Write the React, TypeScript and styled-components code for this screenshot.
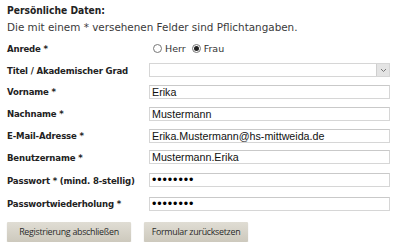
import { createGlobalStyle } from "styled-components";
import styled from "styled-components";

const GlobalStyle = createGlobalStyle`
  html, body {
    margin: 0;
    padding: 0;
    background: #fff;
  }
  body {
    font-family: "DejaVu Sans", Verdana, sans-serif;
    color: #333;
  }
`;

const Page = styled.div`
  padding: 4px 7px 0 7px;
  width: 390px;
  box-sizing: border-box;
`;

const Heading = styled.h2`
  margin: 0;
  font-family: "DejaVu Sans Condensed", "DejaVu Sans", sans-serif;
  font-size: 10.2px;
  font-weight: bold;
  color: #222;
  line-height: 13px;
`;

const Note = styled.p`
  margin: 4px 0 0 0;
  font-size: 10.4px;
  line-height: 13px;
  color: #3a3a3a;
  white-space: nowrap;
`;

const Form = styled.form`
  margin-top: 3.5px;
  display: flex;
  flex-direction: column;
`;

const Row = styled.div<{ $tall?: boolean }>`
  display: grid;
  grid-template-columns: 142px 241px;
  align-items: center;
  height: ${(p) => (p.$tall ? "23.5px" : "21.8px")};
`;

const Label = styled.label`
  font-family: "DejaVu Sans Condensed", "DejaVu Sans", sans-serif;
  font-size: 9.5px;
  font-weight: bold;
  color: #222;
  white-space: nowrap;
  letter-spacing: -0.15px;
`;

const Field = styled.input`
  box-sizing: border-box;
  height: 14px;
  width: 100%;
  margin: 0;
  padding: 0 2px;
  border: 1px solid #d6d6d6;
  border-top-color: #c9c9c9;
  background: #fff;
  font-family: "Liberation Sans", Arial, sans-serif;
  font-size: 10.7px;
  color: #111;
  outline: none;
  &[type="password"] {
    font-size: 12.5px;
    letter-spacing: 0.9px;
    color: #000;
  }
`;

const SelectBox = styled.div`
  box-sizing: border-box;
  height: 14px;
  width: 100%;
  border: 1px solid #d6d6d6;
  background: #fff;
  display: flex;
  justify-content: flex-end;
`;

const SelectArrow = styled.span`
  width: 12px;
  height: 12px;
  background: #e4e4e4;
  border-left: 1px solid #cfcfcf;
  display: flex;
  align-items: center;
  justify-content: center;
`;

const Radios = styled.div`
  display: flex;
  align-items: center;
  gap: 6px;
  margin-left: 4px;
  font-size: 9.5px;
  color: #333;
`;

const RadioOption = styled.label`
  display: flex;
  align-items: center;
  gap: 3px;
`;

const RadioDot = styled.span<{ $checked?: boolean }>`
  box-sizing: border-box;
  width: 9px;
  height: 9px;
  border-radius: 50%;
  border: 1px solid #777;
  background: #fff;
  display: flex;
  align-items: center;
  justify-content: center;
  &::after {
    content: "";
    width: 5px;
    height: 5px;
    border-radius: 50%;
    background: ${(p) => (p.$checked ? "#222" : "transparent")};
  }
`;

const Buttons = styled.div`
  margin-top: 6.5px;
  display: flex;
  gap: 13px;
`;

const Button = styled.button<{ $width: number }>`
  width: ${(p) => p.$width}px;
  height: 20px;
  padding: 0;
  border: none;
  border-radius: 1px;
  background: linear-gradient(#e0ddd4, #cdc9bd);
  box-shadow: 0 1px 1px rgba(0, 0, 0, 0.25);
  font-family: "Open Sans", sans-serif;
  font-size: 8.9px;
  letter-spacing: -0.3px;
  color: #2a2a2a;
  cursor: pointer;
`;

const textFields = [
  { label: "Vorname *", value: "Erika", type: "text" },
  { label: "Nachname *", value: "Mustermann", type: "text" },
  { label: "E-Mail-Adresse *", value: "Erika.Mustermann@hs-mittweida.de", type: "text" },
  { label: "Benutzername *", value: "Mustermann.Erika", type: "text" },
  { label: "Passwort * (mind. 8-stellig)", value: "12345678", type: "password" },
  { label: "Passwortwiederholung *", value: "12345678", type: "password" },
];

export default function App() {
  return (
    <>
      <GlobalStyle />
      <Page>
        <Heading>Persönliche Daten:</Heading>
        <Note>Die mit einem * versehenen Felder sind Pflichtangaben.</Note>
        <Form onSubmit={(e) => e.preventDefault()}>
          <Row>
            <Label>Anrede *</Label>
            <Radios>
              <RadioOption>
                <RadioDot />
                Herr
              </RadioOption>
              <RadioOption>
                <RadioDot $checked />
                Frau
              </RadioOption>
            </Radios>
          </Row>
          <Row>
            <Label>Titel / Akademischer Grad</Label>
            <SelectBox>
              <SelectArrow>
                <svg width="7" height="5" viewBox="0 0 7 5">
                  <path d="M1 1 L3.5 3.5 L6 1" fill="none" stroke="#777" strokeWidth="1" />
                </svg>
              </SelectArrow>
            </SelectBox>
          </Row>
          {textFields.map((f) => (
            <Row key={f.label} $tall={f.type === "password"}>
              <Label>{f.label}</Label>
              <Field type={f.type} defaultValue={f.value} />
            </Row>
          ))}
          <Buttons>
            <Button type="submit" $width={124}>
              Registrierung abschließen
            </Button>
            <Button type="reset" $width={104}>
              Formular zurücksetzen
            </Button>
          </Buttons>
        </Form>
      </Page>
    </>
  );
}
